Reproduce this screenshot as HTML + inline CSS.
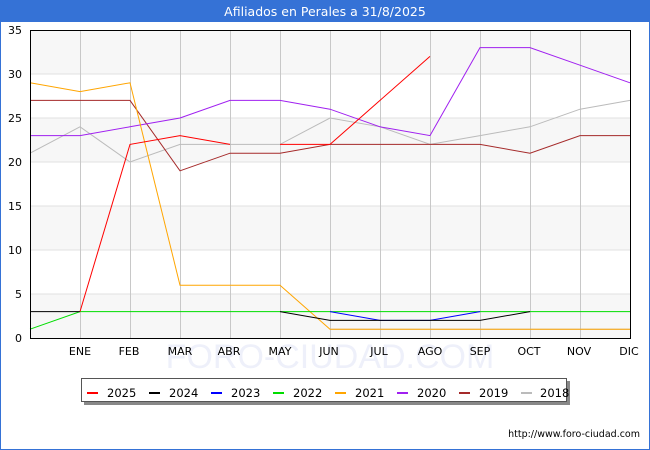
<!DOCTYPE html>
<html><head><meta charset="utf-8"><style>
body{margin:0;background:#fff}
svg{display:block;font-family:"DejaVu Sans","Liberation Sans",sans-serif}
</style></head><body>
<svg width="650" height="450" viewBox="0 0 650 450">
<rect x="0" y="0" width="650" height="450" fill="#fff"/>
<rect x="0.5" y="0.5" width="649" height="449" fill="none" stroke="#3572d6"/>
<rect x="0" y="0" width="650" height="22" fill="#3572d6"/>
<text x="325" y="16" text-anchor="middle" font-size="12.5" fill="#fff">Afiliados en Perales a 31/8/2025</text>
<!-- bands -->
<rect x="30" y="30" width="600" height="44" fill="#f7f7f7"/>
<rect x="30" y="118" width="600" height="44" fill="#f7f7f7"/>
<rect x="30" y="206" width="600" height="44" fill="#f7f7f7"/>
<rect x="30" y="294" width="600" height="44" fill="#f7f7f7"/>
<g stroke="#e0e0e0" stroke-width="1">
<line x1="30" y1="74" x2="630" y2="74"/><line x1="30" y1="118" x2="630" y2="118"/><line x1="30" y1="162" x2="630" y2="162"/><line x1="30" y1="206" x2="630" y2="206"/><line x1="30" y1="250" x2="630" y2="250"/><line x1="30" y1="294" x2="630" y2="294"/>
</g>
<g stroke="#c8c8c8" stroke-width="1">
<line x1="80.5" y1="30" x2="80.5" y2="338"/><line x1="130.5" y1="30" x2="130.5" y2="338"/><line x1="180.5" y1="30" x2="180.5" y2="338"/><line x1="230.5" y1="30" x2="230.5" y2="338"/><line x1="280.5" y1="30" x2="280.5" y2="338"/><line x1="330.5" y1="30" x2="330.5" y2="338"/><line x1="380.5" y1="30" x2="380.5" y2="338"/><line x1="430.5" y1="30" x2="430.5" y2="338"/><line x1="480.5" y1="30" x2="480.5" y2="338"/><line x1="530.5" y1="30" x2="530.5" y2="338"/><line x1="580.5" y1="30" x2="580.5" y2="338"/>
</g>
<text x="330" y="368" text-anchor="middle" font-size="34" fill="#eef0fa" font-family="Liberation Sans,sans-serif">FORO-CIUDAD.COM</text>
<g fill="none" stroke-width="1">
<polyline stroke="#bbbbbb" points="30,153.2 80,126.8 130,162 180,144.4 230,144.4 280,144.4 330,118 380,126.8 430,144.4 480,135.6 530,126.8 580,109.2 630,100.4"/>
<polyline stroke="#bbbbbb" points="330,329.2 630,329.2"/>
<polyline stroke="#a52a2a" points="30,100.4 80,100.4 130,100.4 180,170.8 230,153.2 280,153.2 330,144.4 380,144.4 430,144.4 480,144.4 530,153.2 580,135.6 630,135.6"/>
<polyline stroke="#a020f0" points="30,135.6 80,135.6 130,126.8 180,118 230,100.4 280,100.4 330,109.2 380,126.8 430,135.6 480,47.6 530,47.6 580,65.2 630,82.8"/>
<polyline stroke="#ffa500" points="30,82.8 80,91.6 130,82.8 180,285.2 230,285.2 280,285.2 330,329.2 380,329.2 430,329.2 480,329.2 530,329.2 580,329.2 630,329.2"/>
<polyline stroke="#00dd00" points="30,329.2 80,311.6 630,311.6"/>
<polyline stroke="#0000ff" points="330,311.6 380,320.4 430,320.4 480,311.6"/>
<polyline stroke="#000" points="30,311.6 80,311.6"/>
<polyline stroke="#000" points="280,311.6 330,320.4 380,320.4 430,320.4 480,320.4 530,311.6"/>
<polyline stroke="#ff0000" points="80,311.6 130,144.4 180,135.6 230,144.4"/>
<polyline stroke="#ff0000" points="280,144.4 330,144.4 380,100.4 430,56.4"/>
</g>
<rect x="30.5" y="30.5" width="600" height="308" fill="none" stroke="#000"/>
<g font-size="11" fill="#000" text-anchor="end">
<text x="22" y="34">35</text><text x="22" y="78">30</text><text x="22" y="122">25</text><text x="22" y="166">20</text><text x="22" y="210">15</text><text x="22" y="254">10</text><text x="22" y="298">5</text><text x="22" y="342">0</text>
</g>
<g font-size="11" fill="#000" text-anchor="middle">
<text x="80" y="355">ENE</text><text x="129" y="355">FEB</text><text x="180" y="355">MAR</text><text x="229" y="355">ABR</text><text x="280" y="355">MAY</text><text x="329" y="355">JUN</text><text x="379" y="355">JUL</text><text x="430" y="355">AGO</text><text x="480" y="355">SEP</text><text x="529" y="355">OCT</text><text x="579" y="355">NOV</text><text x="629" y="355">DIC</text>
</g>
<rect x="84" y="381" width="486" height="24" fill="#888"/>
<rect x="81.5" y="378.5" width="485" height="23" fill="#fff" stroke="#555"/>
<g font-size="11.5" fill="#000">
<line x1="87" y1="393" x2="98" y2="393" stroke="#ff0000" stroke-width="2"/><text x="107" y="397">2025</text>
<line x1="149" y1="393" x2="160" y2="393" stroke="#000" stroke-width="2"/><text x="169" y="397">2024</text>
<line x1="211" y1="393" x2="222" y2="393" stroke="#0000ff" stroke-width="2"/><text x="231" y="397">2023</text>
<line x1="273" y1="393" x2="284" y2="393" stroke="#00dd00" stroke-width="2"/><text x="293" y="397">2022</text>
<line x1="335" y1="393" x2="346" y2="393" stroke="#ffa500" stroke-width="2"/><text x="355" y="397">2021</text>
<line x1="397" y1="393" x2="408" y2="393" stroke="#a020f0" stroke-width="2"/><text x="417" y="397">2020</text>
<line x1="459" y1="393" x2="470" y2="393" stroke="#a52a2a" stroke-width="2"/><text x="479" y="397">2019</text>
<line x1="521" y1="393" x2="532" y2="393" stroke="#bbbbbb" stroke-width="2"/><text x="540" y="397">2018</text>
</g>
<text x="640" y="437" text-anchor="end" font-size="9.5" fill="#000">http://www.foro-ciudad.com</text>
</svg>
</body></html>
